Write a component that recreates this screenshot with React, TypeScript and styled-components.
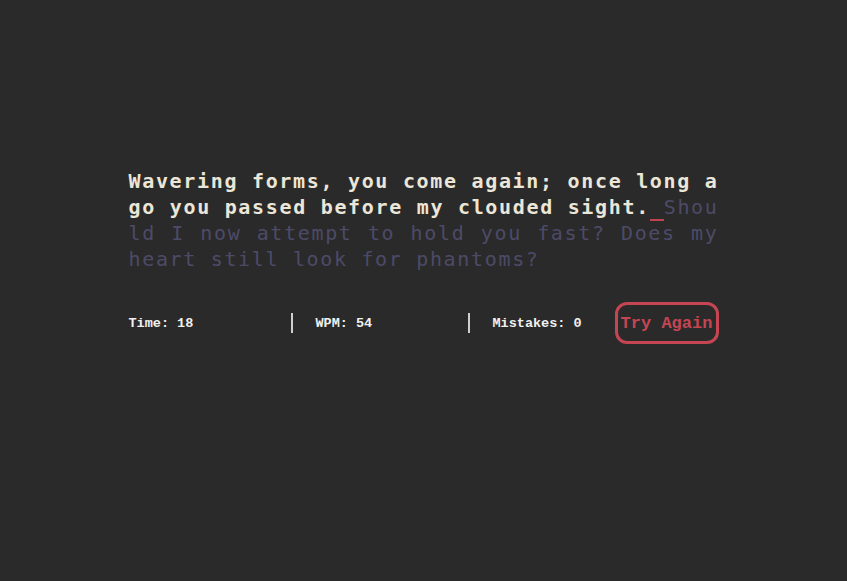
import React from 'react'
import styled, { createGlobalStyle } from 'styled-components'

// G L O B A L
const GlobalStyle = createGlobalStyle`
  html, body {
    margin: 0;
    padding: 0;
    background: #2a2a2a;
  }
  body {
    font-family: "DejaVu Sans Mono", "Liberation Mono", monospace;
  }
`

// D A T A
const typed = 'Wavering forms, you come again; once long ago you passed before my clouded sight.'
const rest = 'Should I now attempt to hold you fast? Does my heart still look for phantoms?'

// C O M P O N E N T
const App: React.FC = () => {
  return (
    <>
      <GlobalStyle />
      <Page>
        <Typer>
          <Passage>
            <Typed>{typed}</Typed>
            <Cursor>{' '}</Cursor>
            <Pending>{rest}</Pending>
          </Passage>
          <Stats>
            <Stat $width={162}>Time: 18</Stat>
            <Divider />
            <Stat $width={175}>WPM: 54</Stat>
            <Divider />
            <Stat $width={123}>Mistakes: 0</Stat>
            <RetryButton>Try Again</RetryButton>
          </Stats>
        </Typer>
      </Page>
    </>
  )
}

export default App

// S T Y L E S
const Page = styled.div`
  min-height: 581px;
  display: flex;
  justify-content: center;
  padding-top: 168px;
  box-sizing: border-box;
`

const Typer = styled.div`
  width: 590px;
  display: flex;
  flex-direction: column;
`

const Passage = styled.p`
  margin: 0;
  width: 590px;
  font-size: 20px;
  line-height: 26px;
  letter-spacing: 1.66px;
  word-break: break-all;
  white-space: pre-wrap;
  text-align: justify;
`

const Typed = styled.span`
  color: #ebe6d8;
  font-weight: 600;
`

const Cursor = styled.span`
  border-bottom: 2px solid #c0434e;
`

const Pending = styled.span`
  color: #4d4a68;
`

const Stats = styled.div`
  display: flex;
  align-items: center;
  margin-top: 30px;
  color: #f0f0f0;
  font-family: "Liberation Mono", "DejaVu Sans Mono", monospace;
  font-weight: 700;
  font-size: 13.5px;
`

const Stat = styled.div<{ $width: number }>`
  width: ${p => p.$width}px;
  padding-left: 23px;
  box-sizing: border-box;

  &:first-child {
    padding-left: 0;
  }
`

const Divider = styled.div`
  width: 2px;
  height: 20px;
  background: #cfcfcf;
`

const RetryButton = styled.button`
  margin-left: auto;
  width: 104px;
  height: 42px;
  border: 3px solid #c64552;
  border-radius: 12px;
  background: transparent;
  color: #c64552;
  font-family: "Liberation Mono", "DejaVu Sans Mono", monospace;
  font-weight: 700;
  font-size: 17px;
  padding: 0;
  cursor: pointer;
`
